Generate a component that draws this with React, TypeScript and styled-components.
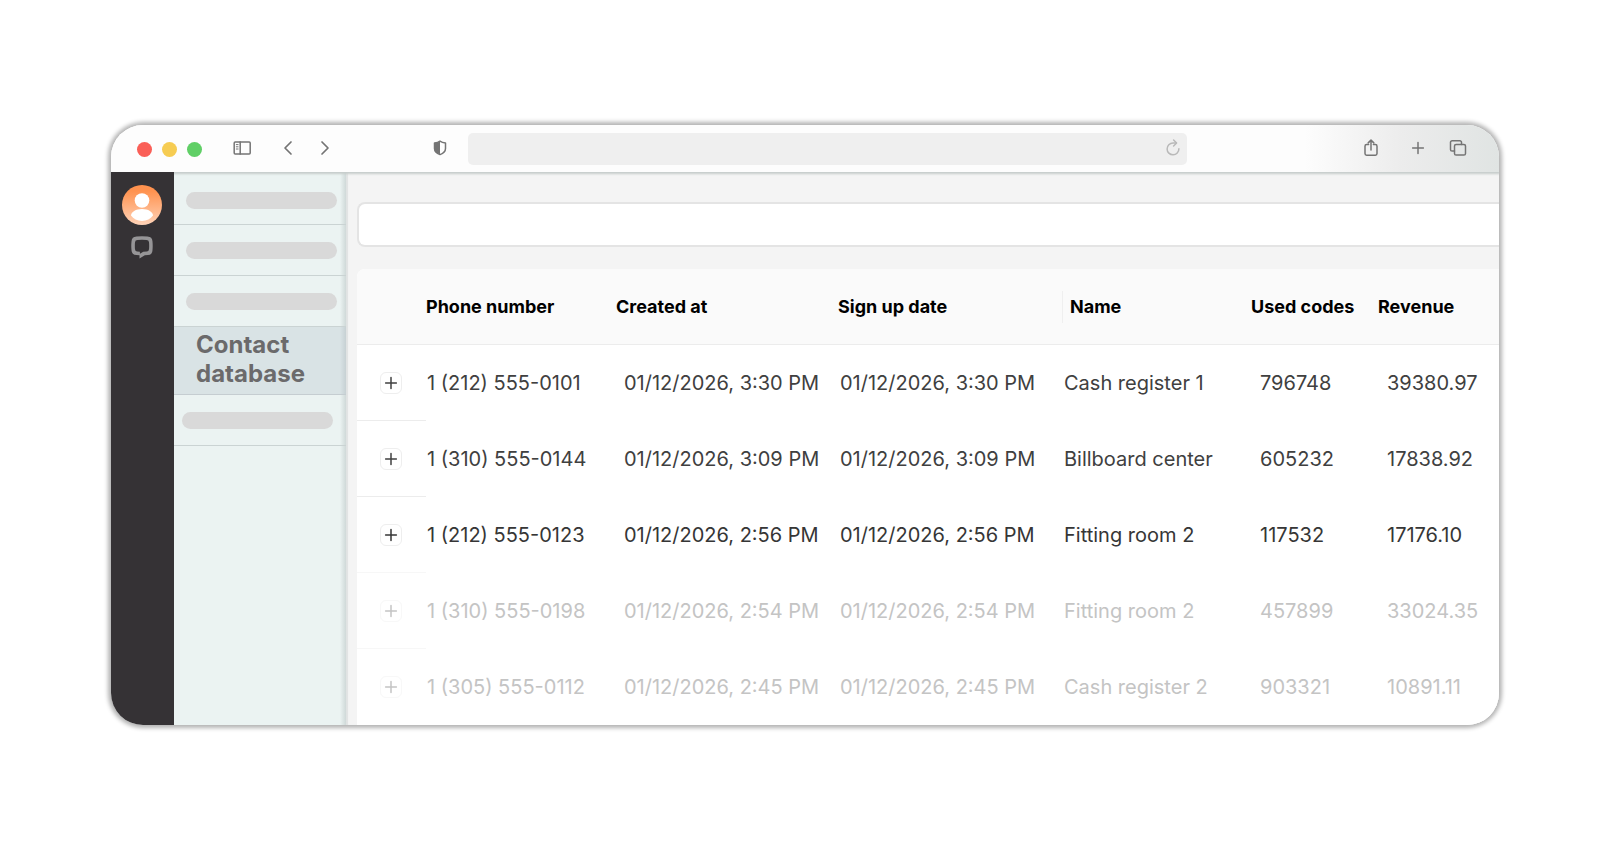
import React from "react";
import styled, { createGlobalStyle } from "styled-components";

const GlobalStyle = createGlobalStyle`
  *, *::before, *::after { box-sizing: border-box; }
  body { margin: 0; background: #fff; font-family: Inter, "Liberation Sans", sans-serif; }
`;

const Page = styled.main`
  display: flex;
  flex-direction: column;
  min-height: 100vh;
  padding: 125px 111px;
`;

const BrowserWindow = styled.section`
  display: flex;
  flex-direction: column;
  overflow: hidden;
  border-radius: 32px;
  background: #fff;
  box-shadow: 0 0 4px 3px rgba(0, 0, 0, 0.3);
`;

const Toolbar = styled.header`
  position: relative;
  z-index: 1;
  display: flex;
  align-items: center;
  height: 47px;
  padding: 0 31px 2px 26px;
  background: linear-gradient(to right, #fdfdfd 86%, #ececec 93%, #e0e4e3 100%);
  box-shadow: 0 1px 2px 1px #c6cccb;
`;

const Lights = styled.div`
  display: flex;
  gap: 10px;
  margin: 4px 30px 0 0;
`;

const Light = styled.span<{ $color: string }>`
  width: 15px;
  height: 15px;
  border-radius: 50%;
  background: ${(p) => p.$color};
`;

const Tools = styled.div<{ $gap: number }>`
  display: flex;
  align-items: center;
  gap: ${(p) => p.$gap}px;
`;

const IconButton = styled.button`
  display: flex;
  align-items: center;
  justify-content: center;
  width: 20px;
  height: 20px;
  padding: 0;
  border: 0;
  background: none;
  color: #747474;
`;

const ShieldSlot = styled.div`
  margin: 0 18px 0 95px;
`;

const AddressBar = styled.div`
  display: flex;
  flex: 1;
  align-items: center;
  min-width: 0;
  height: 32px;
  margin: 2px 174px 0 0;
  padding: 0 4px 2px 0;
  border-radius: 5px;
  background: #efefef;

  ${IconButton} { color: #b9b9b9; }
`;

const AddressInput = styled.input`
  flex: 1;
  min-width: 0;
  height: 100%;
  padding: 0 12px;
  border: 0;
  background: none;
  font: inherit;
`;

const Body = styled.div`
  display: flex;
  align-items: stretch;
`;

const Rail = styled.aside`
  position: relative;
  z-index: 2;
  display: flex;
  flex: 0 0 63px;
  flex-direction: column;
  align-items: center;
  gap: 10px;
  padding: 13px 1px 0 0;
  background: #353235;
`;

const RailButton = styled.button`
  display: flex;
  padding: 0;
  border: 0;
  background: none;
`;

const Sidebar = styled.nav`
  flex: 0 0 172px;
  background: linear-gradient(to left, rgba(60, 80, 80, 0.16), rgba(60, 80, 80, 0) 6px), #ebf3f2;
`;

const NavItem = styled.div<{ $shifted?: boolean }>`
  display: flex;
  align-items: center;
  height: 51px;
  padding: 0 ${(p) => (p.$shifted ? 13 : 9)}px 0 ${(p) => (p.$shifted ? 8 : 12)}px;
  border-bottom: 1px solid #cad3d3;
`;

const FirstItem = styled(NavItem)`
  height: 53px;
  padding-top: 4px;
`;

const Bar = styled.span`
  flex: 1;
  height: 17px;
  border-radius: 9px;
  background: #d9d9d9;
`;

const ActiveItem = styled.a`
  display: block;
  height: 68px;
  padding: 3px 22px 0;
  border-bottom: 1px solid #c5cdd1;
  background: rgba(180, 193, 203, 0.32);
  color: #6b6a6b;
  font-size: 24px;
  font-weight: 700;
  line-height: 29px;
  text-decoration: none;
`;

const Content = styled.div`
  flex: 1;
  min-width: 0;
  padding: 30px 0 0 11px;
  background: #f4f4f4;
  box-shadow: inset 2px 0 1px #e0e3e3;
`;

const SearchInput = styled.input`
  display: block;
  width: 100%;
  height: 45px;
  margin-bottom: 22px;
  padding: 0 16px;
  border: 2px solid #e4e4e4;
  border-right: 0;
  border-radius: 8px 0 0 8px;
  background: #fff;
  font: inherit;
`;

const Table = styled.table`
  width: 100%;
  table-layout: fixed;
  border-spacing: 0;
  overflow: hidden;
  border-radius: 8px 0 0 0;
  background: #fff;
`;

const HeadCell = styled.th<{ $indent: number; $divided?: boolean }>`
  height: 76px;
  padding: 0 0 0 ${(p) => p.$indent}px;
  border-bottom: 1px solid #ececec;
  background: ${(p) =>
    p.$divided
      ? "linear-gradient(#efefef, #efefef) 0 22px / 1px 32px no-repeat, #fafafa"
      : "#fafafa"};
  color: #000;
  font-size: 18px;
  font-weight: 700;
  line-height: 22px;
  text-align: left;
  white-space: nowrap;
`;

const Row = styled.tr<{ $tone: string }>`
  color: ${(p) => p.$tone};
`;

const Cell = styled.td<{ $indent: number }>`
  height: 76px;
  padding: 0 0 0 ${(p) => p.$indent}px;
  font-size: 20px;
  font-weight: 400;
  line-height: 24px;
  white-space: nowrap;
`;

const ExpandCell = styled(Cell)<{ $line: string }>`
  border-bottom: 1px solid ${(p) => p.$line};
`;

const ExpandButton = styled.button<{ $faded: boolean }>`
  display: flex;
  align-items: center;
  justify-content: center;
  width: 22px;
  height: 22px;
  padding: 0;
  border: 1px solid ${(p) => (p.$faded ? "#f8f8f8" : "#eeeeee")};
  border-radius: 6px;
  background: #fff;
  color: inherit;
`;

const columns = [
  { title: "Phone number", width: 190, head: 0, cell: 1 },
  { title: "Created at", width: 222, head: 0, cell: 8 },
  { title: "Sign up date", width: 224, head: 0, cell: 2 },
  { title: "Name", width: 189, head: 8, cell: 2, divided: true },
  { title: "Used codes", width: 127, head: 0, cell: 9 },
  { title: "Revenue", head: 0, cell: 9 },
];

const contacts = [
  { tone: "#404040", line: "#ececec", cells: ["1 (212) 555-0101", "01/12/2026, 3:30 PM", "01/12/2026, 3:30 PM", "Cash register 1", "796748", "39380.97"] },
  { tone: "#404040", line: "#ececec", cells: ["1 (310) 555-0144", "01/12/2026, 3:09 PM", "01/12/2026, 3:09 PM", "Billboard center", "605232", "17838.92"] },
  { tone: "#363636", line: "#f7f7f7", cells: ["1 (212) 555-0123", "01/12/2026, 2:56 PM", "01/12/2026, 2:56 PM", "Fitting room 2", "117532", "17176.10"] },
  { tone: "#c4c4c4", line: "#f7f7f7", faded: true, cells: ["1 (310) 555-0198", "01/12/2026, 2:54 PM", "01/12/2026, 2:54 PM", "Fitting room 2", "457899", "33024.35"] },
  { tone: "#c4c4c4", line: "transparent", faded: true, cells: ["1 (305) 555-0112", "01/12/2026, 2:45 PM", "01/12/2026, 2:45 PM", "Cash register 2", "903321", "10891.11"] },
];

const iconProps = {
  width: 20,
  height: 20,
  viewBox: "0 0 20 20",
  fill: "none",
  stroke: "currentColor",
  strokeWidth: 1.5,
  strokeLinecap: "round" as const,
  strokeLinejoin: "round" as const,
  "aria-hidden": true,
};

const PanelIcon = () => (
  <svg {...iconProps}>
    <rect x="2.2" y="4" width="16" height="12" rx="1" />
    <path d="M8.2 4v12" />
    <path d="M4.3 6.6h1.8M4.3 8.8h1.8M4.3 11h1.8" strokeWidth="1" />
  </svg>
);

const BackIcon = () => (
  <svg {...iconProps} strokeWidth={1.7}><path d="M13 4 7 10l6 6" /></svg>
);

const ForwardIcon = () => (
  <svg {...iconProps} strokeWidth={1.7}><path d="m7 4 6 6-6 6" /></svg>
);

const ShieldIcon = () => (
  <svg {...iconProps}>
    <path d="M10 3.2c1.4 1.1 3.3 1.7 5.5 1.9v5.3c0 2.9-2.3 4.9-5.5 6.2-3.2-1.3-5.5-3.3-5.5-6.2V5.1c2.2-.2 4.1-.8 5.5-1.9Z" />
    <path d="M10 3.2v13.4c-3.2-1.3-5.5-3.3-5.5-6.2V5.1c2.2-.2 4.1-.8 5.5-1.9Z" fill="currentColor" stroke="none" />
  </svg>
);

const ReloadIcon = () => (
  <svg {...iconProps}>
    <path d="M15.9 10.8A5.9 5.9 0 1 1 10 5h3" />
    <path d="m10.6 2 3 3-3 3" />
  </svg>
);

const ShareIcon = () => (
  <svg {...iconProps}>
    <path d="M7.6 6.6H5.6a1.6 1.6 0 0 0-1.6 1.6v7.4a1.6 1.6 0 0 0 1.6 1.6h8.8a1.6 1.6 0 0 0 1.6-1.6V8.2a1.6 1.6 0 0 0-1.6-1.6h-2" />
    <path d="M10 12V2.2M7.2 4.9 10 2.1l2.8 2.8" />
  </svg>
);

const PlusIcon = () => (
  <svg {...iconProps}>
    <path d="M10 4.6v10.8M4.6 10h10.8" />
  </svg>
);

const TabsIcon = () => (
  <svg {...iconProps}>
    <rect x="6.5" y="6.5" width="11" height="10.6" rx="1.6" />
    <path d="M6.5 13H4.1a1.6 1.6 0 0 1-1.6-1.6V4.3a1.6 1.6 0 0 1 1.6-1.6h7.8a1.6 1.6 0 0 1 1.6 1.6v2.2" />
  </svg>
);

const Avatar = () => (
  <svg width="40" height="40" viewBox="0 0 40 40" aria-hidden="true">
    <defs>
      <linearGradient id="avatar-fill" x1="0" y1="0" x2="0" y2="1">
        <stop offset="0.15" stopColor="#ff924f" />
        <stop offset="1" stopColor="#ffd3b8" />
      </linearGradient>
    </defs>
    <circle cx="20" cy="20" r="20" fill="url(#avatar-fill)" />
    <circle cx="20" cy="15.5" r="7.3" fill="#fff" />
    <path d="M9 30.6c0-3.7 4.9-6.6 11-6.6s11 2.9 11 6.6c-2.4 3.4-6.2 5.4-11 5.4s-8.6-2-11-5.4Z" fill="#fff" />
  </svg>
);

const ChatIcon = () => (
  <svg width="24" height="24" viewBox="0 0 24 24" aria-hidden="true">
    <path
      fillRule="evenodd"
      fill="#969597"
      d="M6.5 1.5Q12 1 17.5 1.5Q22.3 1.7 22.5 6.5Q22.9 11 22.5 15.2Q22.3 19.8 18 20L14.8 20.2L9.5 23.5V20.3L6.5 20Q1.7 19.8 1.5 15.2Q1 11 1.5 6.5Q1.7 1.7 6.5 1.5ZM7.5 5Q5.2 5.1 5 7.2Q4.7 11 5 14.3Q5.2 16.5 7.2 16.6L9.9 16.8V18.8L13.3 16.8L16.8 16.6Q18.8 16.5 19 14.3Q19.3 11 19 7.2Q18.8 5.1 16.5 5Q12 4.6 7.5 5Z"
    />
  </svg>
);

export default function App() {
  return (
    <>
      <GlobalStyle />
      <Page>
        <BrowserWindow>
          <Toolbar>
            <Lights>
              <Light $color="#fa5f57" />
              <Light $color="#f6cc52" />
              <Light $color="#60cf66" />
            </Lights>
            <Tools $gap={26}>
              <IconButton aria-label="Toggle sidebar"><PanelIcon /></IconButton>
              <Tools $gap={17}>
                <IconButton aria-label="Back"><BackIcon /></IconButton>
                <IconButton aria-label="Forward"><ForwardIcon /></IconButton>
              </Tools>
            </Tools>
            <ShieldSlot>
              <IconButton aria-label="Privacy report"><ShieldIcon /></IconButton>
            </ShieldSlot>
            <AddressBar>
              <AddressInput aria-label="Address" type="text" />
              <IconButton aria-label="Reload"><ReloadIcon /></IconButton>
            </AddressBar>
            <Tools $gap={27}>
              <IconButton aria-label="Share"><ShareIcon /></IconButton>
              <Tools $gap={20}>
                <IconButton aria-label="New tab"><PlusIcon /></IconButton>
                <IconButton aria-label="Show tabs"><TabsIcon /></IconButton>
              </Tools>
            </Tools>
          </Toolbar>
          <Body>
            <Rail>
              <RailButton aria-label="Profile"><Avatar /></RailButton>
              <RailButton aria-label="Chats"><ChatIcon /></RailButton>
            </Rail>
            <Sidebar aria-label="Sections">
              <FirstItem><Bar /></FirstItem>
              <NavItem><Bar /></NavItem>
              <NavItem><Bar /></NavItem>
              <ActiveItem href="#contacts" aria-current="page">Contact database</ActiveItem>
              <NavItem $shifted><Bar /></NavItem>
            </Sidebar>
            <Content>
              <SearchInput aria-label="Search contacts" type="text" />
              <Table>
                <colgroup>
                  <col width={69} />
                  {columns.map((c) => <col key={c.title} width={c.width} />)}
                </colgroup>
                <thead>
                  <tr>
                    <HeadCell $indent={0} aria-label="Expand" />
                    {columns.map((c) => (
                      <HeadCell key={c.title} scope="col" $indent={c.head} $divided={c.divided}>{c.title}</HeadCell>
                    ))}
                  </tr>
                </thead>
                <tbody>
                  {contacts.map((row) => (
                    <Row key={row.cells[0]} $tone={row.tone}>
                      <ExpandCell $indent={23} $line={row.line}>
                        <ExpandButton $faded={!!row.faded} aria-label={"Expand " + row.cells[0]}>
                          <PlusIcon />
                        </ExpandButton>
                      </ExpandCell>
                      {row.cells.map((text, i) => (
                        <Cell key={columns[i].title} $indent={columns[i].cell}>{text}</Cell>
                      ))}
                    </Row>
                  ))}
                </tbody>
              </Table>
            </Content>
          </Body>
        </BrowserWindow>
      </Page>
    </>
  );
}
